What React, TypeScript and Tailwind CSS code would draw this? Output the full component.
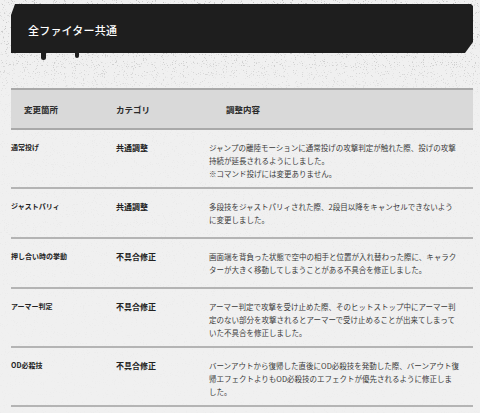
import React from "react";

type Row = {
	part: string;
	category: string;
	lines: string[];
};

const rows: Row[] = [
	{
		part: "通常投げ",
		category: "共通調整",
		lines: [
			"ジャンプの離陸モーションに通常投げの攻撃判定が触れた際、投げの攻撃",
			"持続が延長されるようにしました。",
			"※コマンド投げには変更ありません。",
		],
	},
	{
		part: "ジャストパリィ",
		category: "共通調整",
		lines: [
			"多段技をジャストパリィされた際、2段目以降をキャンセルできないよう",
			"に変更しました。",
		],
	},
	{
		part: "押し合い時の挙動",
		category: "不具合修正",
		lines: [
			"画面端を背負った状態で空中の相手と位置が入れ替わった際に、キャラク",
			"ターが大きく移動してしまうことがある不具合を修正しました。",
		],
	},
	{
		part: "アーマー判定",
		category: "不具合修正",
		lines: [
			"アーマー判定で攻撃を受け止めた際、そのヒットストップ中にアーマー判",
			"定のない部分を攻撃されるとアーマーで受け止めることが出来てしまって",
			"いた不具合を修正しました。",
		],
	},
	{
		part: "OD必殺技",
		category: "不具合修正",
		lines: [
			"バーンアウトから復帰した直後にOD必殺技を発動した際、バーンアウト復",
			"帰エフェクトよりもOD必殺技のエフェクトが優先されるように修正しま",
			"した。",
		],
	},
];

// grunge speckle behind the page content, heaviest round the banner
function Grain() {
	return (
		<svg
			className="pointer-events-none absolute inset-0"
			width="480"
			height="413"
			aria-hidden="true"
		>
			<defs>
				<filter id="grain" x="0" y="0" width="100%" height="100%">
					<feTurbulence
						type="fractalNoise"
						baseFrequency="0.9"
						numOctaves="2"
						seed="7"
					/>
					<feColorMatrix
						type="matrix"
						values="0 0 0 0 0.35  0 0 0 0 0.35  0 0 0 0 0.35  0 0 0 -9 3.3"
					/>
				</filter>
				<linearGradient id="fade" x1="0" y1="0" x2="0" y2="1">
					<stop offset="0" stopColor="#fff" stopOpacity="0.55" />
					<stop offset="0.16" stopColor="#fff" stopOpacity="0.4" />
					<stop offset="0.24" stopColor="#fff" stopOpacity="0.08" />
					<stop offset="1" stopColor="#fff" stopOpacity="0.03" />
				</linearGradient>
				<mask id="m">
					<rect width="480" height="413" fill="url(#fade)" />
				</mask>
			</defs>
			<rect width="480" height="413" filter="url(#grain)" mask="url(#m)" />
		</svg>
	);
}

export default function App() {
	return (
		<div className="relative h-[413px] w-[480px] overflow-hidden bg-[#f0f0f0] font-['Noto_Sans_CJK_JP','Noto_Sans',sans-serif] text-[#2b2b2b]">
			<Grain />
			<div className="relative flex flex-col px-[11px] pr-[7px] pt-[4px]">
				{/* title banner */}
				<div className="relative">
					<div className="flex h-[49px] items-center bg-[#1e1e1e] pl-[17px] pt-[4px] [clip-path:polygon(4px_0,calc(100%-2px)_0,100%_2px,100%_calc(100%-11px),calc(100%-8px)_100%,0_100%,0_11px)]">
						<h2 className="text-[11px] font-medium tracking-[0.2px] text-white">
							全ファイター共通
						</h2>
					</div>
					<span className="absolute left-[30px] top-[47px] h-[9px] w-[5px] rounded-b-full bg-[#1e1e1e]" />
					<span className="absolute left-[64px] top-[47px] h-[7px] w-[4px] rounded-b-full bg-[#1e1e1e]" />
				</div>

				{/* table */}
				<div className="mt-[35px] flex flex-col">
					<div className="grid h-[42px] grid-cols-[92px_106px_1fr] items-center border-y-2 border-[#a9a9a9] bg-[#d9d9d9] text-[8.5px] font-bold text-[#2a2a2a]">
						<div className="pl-[13px]">変更箇所</div>
						<div className="pl-[13px]">カテゴリ</div>
						<div className="pl-[17px]">調整内容</div>
					</div>
					{rows.map((row) => (
						<div
							key={row.part}
							className="grid min-h-[50px] grid-cols-[92px_106px_1fr] border-b-2 border-[#b4b4b4] pb-[7px] pt-[11px] leading-[13px]"
						>
							<div className="text-[7px] font-bold text-[#222]">{row.part}</div>
							<div className="pl-[13px] text-[8px] font-bold text-[#222]">
								{row.category}
							</div>
							<div className="whitespace-nowrap text-[7.5px] text-[#3a3a3a]">
								{row.lines.map((line) => (
									<div key={line}>{line}</div>
								))}
							</div>
						</div>
					))}
				</div>
			</div>
		</div>
	);
}
